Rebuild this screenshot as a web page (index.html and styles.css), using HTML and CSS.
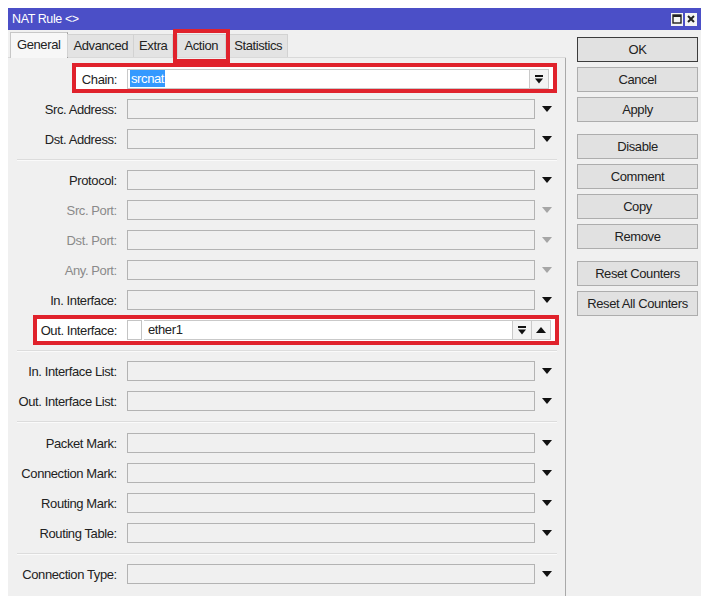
FILE: index.html
```html
<!DOCTYPE html>
<html lang="en">
<head>
    <meta charset="UTF-8">
    <meta name="viewport" content="width=device-width, initial-scale=1.0">
	<link rel="stylesheet" href="styles.css">
</head>
<body>
	<div class="window">
		<div class="titlebar">
			<span class="title">NAT Rule &lt;&gt;</span>
			<span class="win-btns">
				<span class="win-btn"><svg width="10" height="10" viewBox="0 0 10 10"><rect x="1" y="1" width="8" height="8" fill="none" stroke="#222" stroke-width="1.4"/><rect x="1" y="1" width="8" height="2" fill="#222"/></svg></span>
				<span class="win-btn"><svg width="10" height="10" viewBox="0 0 10 10"><path d="M2 2 L8 8 M8 2 L2 8" stroke="#222" stroke-width="2"/></svg></span>
			</span>
		</div>
		<div class="body">
			<div class="main">
				<div class="tabs">
					<div class="tab active">General</div>
					<div class="tab">Advanced</div>
					<div class="tab">Extra</div>
					<div class="tab marked">Action</div>
					<div class="tab">Statistics</div>
				</div>
				<div class="panel">
					<div class="row mark-chain">
						<label class="lbl">Chain:</label>
						<div class="field white"><span class="sel">srcnat</span></div>
						<span class="drop"><svg width="8" height="9" viewBox="0 0 8 9"><rect x="0" y="0" width="8" height="2" fill="#111"/><polygon points="0,3.5 8,3.5 4,8.5" fill="#111"/></svg></span>
					</div>
					<div class="row">
						<label class="lbl">Src. Address:</label>
						<div class="field"></div>
						<span class="arrow"></span>
					</div>
					<div class="row">
						<label class="lbl">Dst. Address:</label>
						<div class="field"></div>
						<span class="arrow"></span>
					</div>
					<div class="sep"></div>
					<div class="row">
						<label class="lbl">Protocol:</label>
						<div class="field"></div>
						<span class="arrow"></span>
					</div>
					<div class="row off">
						<label class="lbl">Src. Port:</label>
						<div class="field"></div>
						<span class="arrow"></span>
					</div>
					<div class="row off">
						<label class="lbl">Dst. Port:</label>
						<div class="field"></div>
						<span class="arrow"></span>
					</div>
					<div class="row off">
						<label class="lbl">Any. Port:</label>
						<div class="field"></div>
						<span class="arrow"></span>
					</div>
					<div class="row">
						<label class="lbl">In. Interface:</label>
						<div class="field"></div>
						<span class="arrow"></span>
					</div>
					<div class="row mark-out">
						<label class="lbl">Out. Interface:</label>
						<span class="invert"></span>
						<div class="field white">ether1</div>
						<span class="drop"><svg width="8" height="9" viewBox="0 0 8 9"><rect x="0" y="0" width="8" height="2" fill="#111"/><polygon points="0,3.5 8,3.5 4,8.5" fill="#111"/></svg></span>
						<span class="up"></span>
					</div>
					<div class="sep"></div>
					<div class="row">
						<label class="lbl">In. Interface List:</label>
						<div class="field"></div>
						<span class="arrow"></span>
					</div>
					<div class="row">
						<label class="lbl">Out. Interface List:</label>
						<div class="field"></div>
						<span class="arrow"></span>
					</div>
					<div class="sep tall"></div>
					<div class="row">
						<label class="lbl">Packet Mark:</label>
						<div class="field"></div>
						<span class="arrow"></span>
					</div>
					<div class="row">
						<label class="lbl">Connection Mark:</label>
						<div class="field"></div>
						<span class="arrow"></span>
					</div>
					<div class="row">
						<label class="lbl">Routing Mark:</label>
						<div class="field"></div>
						<span class="arrow"></span>
					</div>
					<div class="row">
						<label class="lbl">Routing Table:</label>
						<div class="field"></div>
						<span class="arrow"></span>
					</div>
					<div class="sep"></div>
					<div class="row">
						<label class="lbl">Connection Type:</label>
						<div class="field"></div>
						<span class="arrow"></span>
					</div>
				</div>
			</div>
			<div class="side">
				<div class="btn default">OK</div>
				<div class="btn">Cancel</div>
				<div class="btn">Apply</div>
				<div class="btn group">Disable</div>
				<div class="btn">Comment</div>
				<div class="btn">Copy</div>
				<div class="btn">Remove</div>
				<div class="btn group">Reset Counters</div>
				<div class="btn">Reset All Counters</div>
			</div>
		</div>
	</div>
</body>
</html>
```

FILE: styles.css
```css
body {
	margin: 0;
	background: #fff;
	font-family: 'Liberation Sans', Arial, sans-serif;
	font-size: 13px;
	letter-spacing: -0.4px;
	color: #222;
}
.window {
	margin: 8px 0 0 8px;
	width: 693px;
	height: 588px;
	background: #f0f0f0;
	display: flex;
	flex-direction: column;
}
.titlebar {
	height: 22px;
	background: #4b4fc7;
	color: #fff;
	display: flex;
	align-items: center;
	padding: 0 4px 0 4px;
}
.title {
	font-size: 12.5px;
}
.win-btns {
	margin-left: auto;
	display: flex;
	gap: 2px;
}
.win-btn {
	width: 12px;
	height: 13px;
	background: #f4f4f4;
	display: flex;
	align-items: center;
	justify-content: center;
}
.body {
	flex: 1;
	display: flex;
}
.main {
	width: 558px;
	display: flex;
	flex-direction: column;
}
.tabs {
	display: flex;
	padding: 3px 0 0 2px;
	height: 24px;
	align-items: flex-end;
	border-bottom: 1px solid #d9d9d9;
}
.tab {
	height: 22px;
	line-height: 22px;
	padding: 0 5px;
	background: #e3e3e3;
	border: 1px solid #d2d2d2;
	border-bottom: none;
	margin-right: -1px;
}
.tab.active {
	height: 25px;
	line-height: 24px;
	background: #f7f7f7;
	border-color: #c7c7c7;
	border-right-color: #a0a0a0;
	padding: 0 7px 0 6px;
	margin-bottom: -1px;
}
.tab.marked {
	position: relative;
	margin: 0 2px 0 5px;
	padding: 0 7px 0 6px;
}
.tab.marked:before {
	content: '';
	position: absolute;
	left: -5px;
	right: -5px;
	top: -6px;
	bottom: -6px;
	border: 4px solid #e0222c;
}
.panel {
	flex: 1;
	padding: 6px 8px 0 0;
	border-right: 1px solid #a9a9a9;
}
.row {
	position: relative;
	height: 30px;
	display: flex;
	align-items: center;
}
.row > * {
	position: relative;
	z-index: 1;
}
.lbl {
	width: 109px;
	text-align: right;
	margin-right: 10px;
	white-space: nowrap;
}
.off .lbl {
	color: #8a8a8a;
}
.field {
	width: 405px;
	height: 18px;
	border: 1px solid #b3b3b3;
	background: #f0f0f0;
	line-height: 18px;
	padding-left: 2px;
	box-sizing: content-box;
}
.field.white {
	background: #fff;
	border-color: #c9c9c9;
	width: auto;
	flex: 1;
}
.sel {
	background: #3399ff;
	color: #fff;
	padding: 1px 1px;
}
.arrow {
	width: 22px;
	height: 20px;
	display: flex;
	align-items: center;
	justify-content: center;
}
.arrow:before {
	content: '';
	border-left: 5px solid transparent;
	border-right: 5px solid transparent;
	border-top: 6px solid #111;
	margin-left: 1px;
}
.off .arrow:before {
	border-top-color: #a6a6a6;
}
.drop, .up {
	width: 19px;
	height: 20px;
	box-sizing: border-box;
	border: 1px solid #c9c9c9;
	border-left: none;
	background: #f3f3f3;
	display: flex;
	align-items: center;
	justify-content: center;
}
.up:before {
	content: '';
	border-left: 5px solid transparent;
	border-right: 5px solid transparent;
	border-bottom: 6px solid #111;
}
.mark-chain:before, .mark-out:before {
	content: '';
	position: absolute;
	z-index: 0;
	background: #fff;
	border: 4px solid #e0222c;
}
.mark-chain:before {
	left: 64px;
	right: 0;
	top: -1px;
	bottom: 1px;
}
.mark-chain .drop {
	margin-right: 8px;
}
.mark-out:before {
	left: 25px;
	right: -2px;
	top: 0;
	bottom: 0;
}
.mark-out .field.white {
	border-left: none;
	padding-left: 4px;
}
.mark-out .up {
	margin-right: 6px;
}
.invert {
	width: 13px;
	height: 18px;
	border: 1px solid #c4c4c4;
	background: #fff;
	margin-right: 2px;
}
.sep {
	height: 11px;
	margin-left: 9px;
	display: flex;
	align-items: center;
}
.sep:before {
	content: '';
	flex: 1;
	border-top: 1px solid #dcdcdc;
	border-bottom: 1px solid #fafafa;
}
.sep.tall {
	height: 12px;
}
.side {
	padding: 7px 0 0 11px;
	display: flex;
	flex-direction: column;
}
.btn {
	width: 121px;
	height: 25px;
	box-sizing: border-box;
	border: 1px solid #adadad;
	background: #e1e1e1;
	text-align: center;
	line-height: 23px;
	margin-bottom: 5px;
}
.btn.default {
	border-color: #3c3c3c;
}
.btn.group {
	margin-top: 7px;
}
```
